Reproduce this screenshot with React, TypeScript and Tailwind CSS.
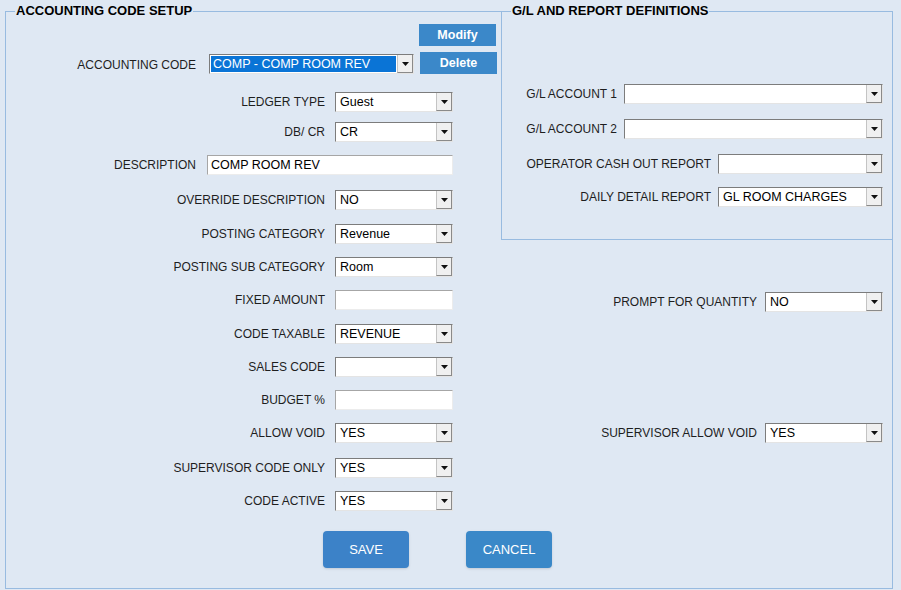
import React from "react";

// Left column rows of the accounting code form
type Row = { label: string; value?: string; kind: "select" | "input"; mt: string };

const leftRows: Row[] = [
    { label: "LEDGER TYPE", value: "Guest", kind: "select", mt: "mt-[18px]" },
    { label: "DB/ CR", value: "CR", kind: "select", mt: "mt-[10px]" },
];

const leftRows2: Row[] = [
    { label: "OVERRIDE DESCRIPTION", value: "NO", kind: "select", mt: "mt-[15px]" },
    { label: "POSTING CATEGORY", value: "Revenue", kind: "select", mt: "mt-[14px]" },
    { label: "POSTING SUB CATEGORY", value: "Room", kind: "select", mt: "mt-[13px]" },
    { label: "FIXED AMOUNT", kind: "input", mt: "mt-[13px]" },
    { label: "CODE TAXABLE", value: "REVENUE", kind: "select", mt: "mt-[14px]" },
    { label: "SALES CODE", value: "", kind: "select", mt: "mt-[13px]" },
    { label: "BUDGET %", kind: "input", mt: "mt-[13px]" },
    { label: "ALLOW VOID", value: "YES", kind: "select", mt: "mt-[13px]" },
    { label: "SUPERVISOR CODE ONLY", value: "YES", kind: "select", mt: "mt-[15px]" },
    { label: "CODE ACTIVE", value: "YES", kind: "select", mt: "mt-[13px]" },
];

const glRows = [
    { label: "G/L ACCOUNT 1", value: "", w: "w-[259px]", mt: "mt-[65px]" },
    { label: "G/L ACCOUNT 2", value: "", w: "w-[259px]", mt: "mt-[15px]" },
    { label: "OPERATOR CASH OUT REPORT", value: "", w: "w-[165px]", mt: "mt-[15px]" },
    { label: "DAILY DETAIL REPORT", value: "GL ROOM CHARGES", w: "w-[165px]", mt: "mt-[13px]" },
];

const Arrow = () => (
    <div className="w-[16px] h-full flex items-center justify-center bg-[#f0f0f0] border-l border-[#c4c4c4] border-r border-r-[#8a8a8a] border-b border-b-[#8a8a8a]">
        <svg width="7" height="4" viewBox="0 0 7 4">
            <polygon points="0,0 7,0 3.5,4" fill="#111" />
        </svg>
    </div>
);

const Select = ({ value, w, selected }: { value?: string; w: string; selected?: boolean }) => (
    <div className={`flex shrink-0 h-[20px] ${w} bg-white border-t border-l border-[#7c7c7c] border-r border-b border-r-[#e4e4e4] border-b-[#e4e4e4]`}>
        <div className="flex-1 min-w-0 flex items-center p-[1px]">
            {selected ? (
                <span className="w-full h-full flex items-center pl-[2px] bg-[#0a74d6] text-white text-[12.5px] whitespace-nowrap">
                    {value}
                </span>
            ) : (
                <span className="pl-[3px] text-[12.5px] text-black whitespace-nowrap">{value}</span>
            )}
        </div>
        <Arrow />
    </div>
);

const Input = ({ value, w }: { value?: string; w: string }) => (
    <div className={`flex shrink-0 items-center h-[20px] ${w} bg-white border-t border-l border-[#a6a6a6] border-r border-b border-r-[#ececec] border-b-[#ececec] pl-[3px] text-[12.5px] text-black whitespace-nowrap`}>
        {value}
    </div>
);

const FormRow = ({ row }: { row: Row }) => (
    <div className={`flex items-center ${row.mt}`}>
        <div className="w-[319px] shrink-0 text-right text-[12px] text-[#1e1e1e]">{row.label}</div>
        <div className="ml-[10px]">
            {row.kind === "select" ? <Select value={row.value} w="w-[118px]" /> : <Input w="w-[118px]" />}
        </div>
    </div>
);

export default function App() {
    return (
        <div className="w-[901px] h-[590px] bg-[#dfe8f3] pl-[5px] pt-[3px] font-['Liberation_Sans',Arial,sans-serif] overflow-hidden">
            <fieldset className="w-[888px] h-[586px] border border-[#98bbe0]">
                <legend className="ml-[9px] px-[1px] text-[13px] leading-[16px] font-bold text-black">
                    ACCOUNTING CODE SETUP
                </legend>

                <div className="flex">
                    {/* Left column: code setup */}
                    <div className="w-[495px] shrink-0 flex flex-col">
                        <div className="ml-[413px] mt-[5px] w-[77px] h-[22px] bg-[#3b88c9] text-white font-bold text-[12.5px] flex items-center justify-center">
                            Modify
                        </div>
                        <div className="flex items-center mt-[6px]">
                            <div className="w-[190px] shrink-0 text-right text-[12px] text-[#1e1e1e] pt-[3px]">ACCOUNTING CODE</div>
                            <div className="ml-[13px] mt-[2px]">
                                <Select value="COMP - COMP ROOM REV" w="w-[205px]" selected />
                            </div>
                            <div className="ml-[6px] shrink-0 w-[77px] h-[22px] bg-[#3b88c9] text-white font-bold text-[12.5px] flex items-center justify-center">
                                Delete
                            </div>
                        </div>

                        {leftRows.map((r) => (
                            <FormRow key={r.label} row={r} />
                        ))}

                        <div className="flex items-center mt-[13px]">
                            <div className="w-[190px] shrink-0 text-right text-[12px] text-[#1e1e1e]">DESCRIPTION</div>
                            <div className="ml-[11px]">
                                <Input value="COMP ROOM REV" w="w-[246px]" />
                            </div>
                        </div>

                        {leftRows2.map((r) => (
                            <FormRow key={r.label} row={r} />
                        ))}

                        <div className="flex mt-[20px] ml-[317px] gap-[57px]">
                            <div className="w-[86px] h-[37px] shrink-0 rounded-[4px] bg-[#3c82c8] text-white text-[13px] flex items-center justify-center shadow-sm">
                                SAVE
                            </div>
                            <div className="w-[86px] h-[37px] shrink-0 rounded-[4px] bg-[#3a88c8] text-white text-[13px] flex items-center justify-center shadow-sm">
                                CANCEL
                            </div>
                        </div>
                    </div>

                    {/* Right column: G/L definitions */}
                    <div className="flex-1 flex flex-col">
                        <fieldset className="-mt-[16px] -mr-[1px] h-[237px] border border-[#98bbe0]">
                            <legend className="ml-[9px] px-[1px] text-[13px] leading-[16px] font-bold text-black bg-[#dfe8f3]">
                                G/L AND REPORT DEFINITIONS
                            </legend>
                            {glRows.map((r) => (
                                <div key={r.label} className={`flex items-center justify-end gap-[7px] pr-[9px] ${r.mt}`}>
                                    <span className="text-[12px] text-[#1e1e1e]">{r.label}</span>
                                    <Select value={r.value} w={r.w} />
                                </div>
                            ))}
                        </fieldset>

                        <div className="flex items-center justify-end gap-[8px] pr-[9px] mt-[52px]">
                            <span className="text-[12px] text-[#1e1e1e]">PROMPT FOR QUANTITY</span>
                            <Select value="NO" w="w-[118px]" />
                        </div>
                        <div className="flex items-center justify-end gap-[8px] pr-[9px] mt-[111px]">
                            <span className="text-[12px] text-[#1e1e1e]">SUPERVISOR ALLOW VOID</span>
                            <Select value="YES" w="w-[118px]" />
                        </div>
                    </div>
                </div>
            </fieldset>
        </div>
    );
}
